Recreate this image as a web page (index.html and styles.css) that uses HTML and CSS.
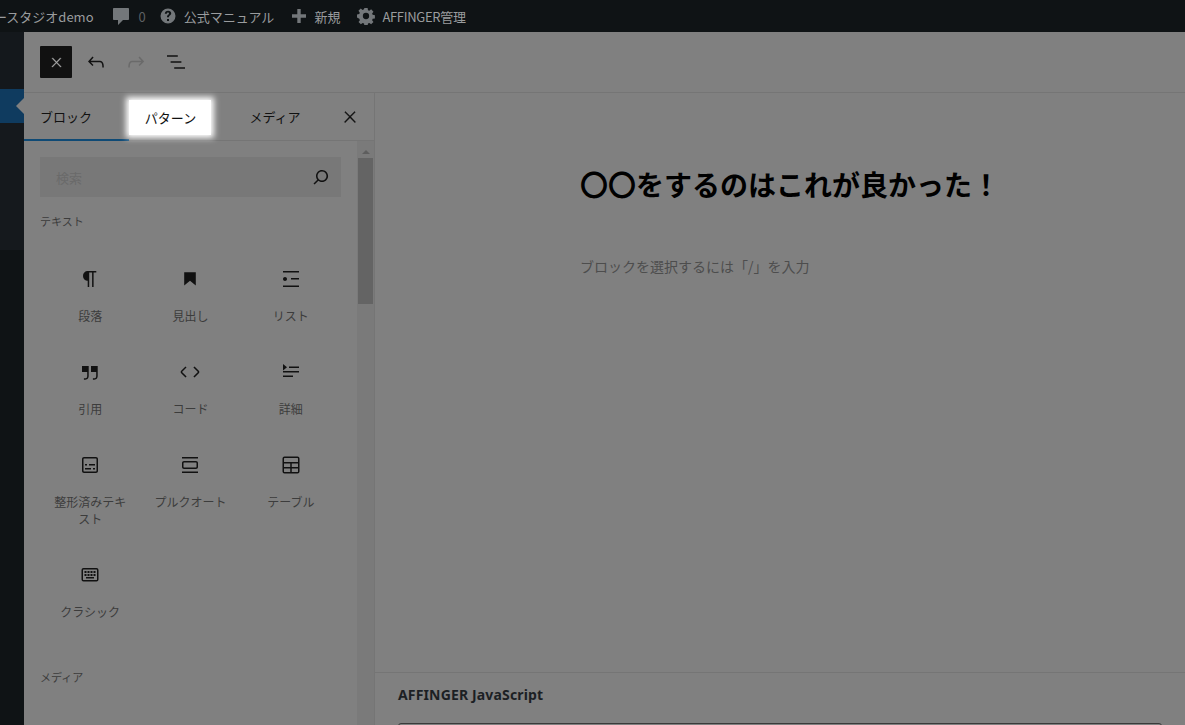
FILE: index.html
```html
<!DOCTYPE html>
<html lang="ja">

<head>
    <meta charset="UTF-8">
    <title>投稿を編集</title>
    <link rel="stylesheet" href="styles.css">
</head>

<body>
    <div class="adminbar">
        <span class="bar-item site-name">ースタジオdemo</span>
        <span class="bar-item comments">
            <svg class="bar-icon" viewBox="0 0 20 20"><path d="M3 2h14c.6 0 1 .4 1 1v10c0 .6-.4 1-1 1h-5l-5 5v-5H3c-.6 0-1-.4-1-1V3c0-.6.4-1 1-1z"/></svg>
            <span class="count">0</span>
        </span>
        <span class="bar-item manual">
            <svg class="bar-icon" viewBox="0 0 20 20"><path fill-rule="evenodd" d="M10 2.500a7.500 7.500 0 1 1 0 15 7.500 7.500 0 0 1 0-15zM9 13v2h2v-2H9zm1.100-8.200c-1.900 0-3.200 1-3.300 2.900h2c0-.8.5-1.200 1.200-1.200.6 0 1 .4 1 1 0 .5-.3.8-.8 1.200-.9.6-1.200 1.200-1.200 2.500h2c0-.8.2-1.100.9-1.600.8-.6 1.300-1.200 1.300-2.300 0-1.500-1.200-2.500-3.100-2.500z"/></svg>
            公式マニュアル
        </span>
        <span class="bar-item new">
            <svg class="bar-icon" viewBox="0 0 20 20"><path d="M8.300 3h3.400v5.300H17v3.400h-5.300V17H8.300v-5.300H3V8.300h5.300z"/></svg>
            新規
        </span>
        <span class="bar-item affinger">
            <svg class="bar-icon gear" viewBox="0 0 20 20"><path fill-rule="evenodd" d="M8.200 1h3.600l.4 2.500 1.500.6 2-1.500 2.600 2.600-1.500 2 .6 1.500 2.500.4v3.600l-2.500.4-.6 1.500 1.500 2-2.600 2.600-2-1.500-1.500.6-.4 2.500H8.200l-.4-2.500-1.500-.6-2 1.500-2.600-2.600 1.500-2-.6-1.500L0 11.800V8.200l2.500-.4.6-1.500-1.500-2 2.600-2.600 2 1.500 1.500-.6zM10 6.500a3.500 3.500 0 1 0 0 7 3.500 3.500 0 0 0 0-7z"/></svg>
            AFFINGER管理
        </span>
    </div>

    <div class="main">
        <div class="wpmenu">
            <div class="menu-top"></div>
            <div class="menu-active"><span class="menu-arrow"></span></div>
            <div class="menu-rest"></div>
        </div>

        <div class="editor">
            <div class="toolbar">
                <button class="close-editor">
                    <svg viewBox="0 0 24 24"><path d="M13 11.800l6.100-6.300-1-1-6.100 6.200-6.100-6.200-1 1 6.100 6.300-6.500 6.700 1 1 6.500-6.600 6.500 6.600 1-1z"/></svg>
                </button>
                <button class="tool">
                    <svg viewBox="0 0 24 24"><path d="M18.300 11.700c-.6-.6-1.400-.9-2.300-.9H6.700l2.900-3.300-1.100-1-4.500 5L8.500 16l1-1-2.700-2.700H16c.5 0 .9.2 1.300.5 1 1 1 3.400 1 4.500v.3h1.500v-.2c0-1.500 0-4.300-1.500-5.700z"/></svg>
                </button>
                <button class="tool disabled">
                    <svg viewBox="0 0 24 24"><path d="M15.600 6.500l-1.100 1 2.900 3.300H8c-.9 0-1.700.3-2.300.9-1.400 1.500-1.400 4.200-1.400 5.600v.2h1.500v-.3c0-1.100 0-3.500 1-4.500.3-.3.7-.5 1.300-.5h9.200L14.500 15l1.100 1.100 4.600-4.600-4.600-5z"/></svg>
                </button>
                <button class="tool">
                    <svg viewBox="0 0 24 24"><path d="M13.800 5.200H3v1.500h10.800V5.200zm-3.600 12v1.500H21v-1.500H10.200zm7.200-6H6.600v1.500h10.800v-1.500z"/></svg>
                </button>
            </div>

            <div class="workspace">
                <div class="inserter">
                    <div class="tabs">
                        <div class="tab tab-active">ブロック</div>
                        <div class="tab tab-glow">パターン</div>
                        <div class="tab">メディア</div>
                        <button class="tabs-close">
                            <svg viewBox="0 0 24 24"><path d="M13 11.800l6.100-6.300-1-1-6.100 6.200-6.100-6.200-1 1 6.100 6.300-6.500 6.700 1 1 6.500-6.600 6.500 6.600 1-1z"/></svg>
                        </button>
                    </div>
                    <div class="inserter-body">
                        <div class="block-list">
                            <div class="search">
                                <span class="search-text">検索</span>
                                <svg viewBox="0 0 24 24"><path d="M13 5c-3.300 0-6 2.700-6 6 0 1.400.5 2.700 1.300 3.700l-3.800 3.800 1.100 1.100 3.800-3.800c1 .8 2.300 1.300 3.700 1.300 3.300 0 6-2.700 6-6S16.300 5 13 5zm0 10.500c-2.500 0-4.500-2-4.500-4.500s2-4.500 4.500-4.500 4.500 2 4.500 4.500-2 4.500-4.500 4.500z"/></svg>
                            </div>
                            <div class="category">テキスト</div>
                            <div class="block-grid">
                                <div class="block">
                                    <svg viewBox="0 0 24 24"><path d="M18.300 4H9.900v-.1l-.9.2c-2.300.4-4 2.400-4 4.800s1.700 4.400 4 4.800l.7.1V20h1.500V5.500h2.900V20h1.500V5.500h2.700V4z"/></svg>
                                    <span>段落</span>
                                </div>
                                <div class="block">
                                    <svg viewBox="0 0 24 24"><path d="M6.200 5.200v13.400l5.800-4.800 5.800 4.800V5.200z"/></svg>
                                    <span>見出し</span>
                                </div>
                                <div class="block">
                                    <svg viewBox="0 0 24 24"><path d="M4 4v1.500h16V4H4zm8 8.500h8V11h-8v1.500zM4 20h16v-1.500H4V20zm4-8c0-1.100-.9-2-2-2s-2 .9-2 2 .9 2 2 2 2-.9 2-2z"/></svg>
                                    <span>リスト</span>
                                </div>
                                <div class="block">
                                    <svg viewBox="0 0 24 24"><path d="M13 6v6h5.200v4c0 .8-.2 1.400-.5 1.700-.6.600-1.600.6-2.500.5h-.3v1.500h.5c1 0 2.300-.1 3.300-1 .6-.6 1-1.600 1-2.800V6H13zm-9 6h5.200v4c0 .8-.2 1.400-.5 1.700-.6.600-1.600.6-2.500.5h-.3v1.500h.5c1 0 2.300-.1 3.300-1 .6-.6 1-1.600 1-2.800V6H4v6z"/></svg>
                                    <span>引用</span>
                                </div>
                                <div class="block">
                                    <svg viewBox="0 0 24 24"><path d="M20.800 10.700l-4.300-4.300-1.100 1.100 4.300 4.300c.1.100.1.300 0 .4l-4.300 4.300 1.100 1.100 4.300-4.300c.7-.8.700-1.900 0-2.600zM4.200 11.800l4.300-4.300-1-1-4.300 4.300c-.7.700-.7 1.800 0 2.500l4.300 4.300 1.100-1.100-4.300-4.300c-.2-.1-.2-.3-.1-.4z"/></svg>
                                    <span>コード</span>
                                </div>
                                <div class="block">
                                    <svg viewBox="0 0 24 24"><path d="M4 15.500h10V17H4v-1.500zM4 11h16v1.500H4V11zm6-4.500h10V8H10V6.500zM4 4l4 3.250-4 3.250z"/></svg>
                                    <span>詳細</span>
                                </div>
                                <div class="block">
                                    <svg viewBox="0 0 24 24"><path d="M18 4H6c-1.100 0-2 .9-2 2v12c0 1.100.9 2 2 2h12c1.100 0 2-.9 2-2V6c0-1.100-.9-2-2-2zm.5 14c0 .3-.2.5-.5.5H6c-.3 0-.5-.2-.5-.5V6c0-.3.2-.5.5-.5h12c.3 0 .5.2.5.5v12zM7 16.500h6V15H7v1.500zm4-4h6V11h-6v1.500zM9 11H7v1.500h2V11zm6 5.500h2V15h-2v1.500z"/></svg>
                                    <span>整形済みテキスト</span>
                                </div>
                                <div class="block">
                                    <svg viewBox="0 0 24 24"><path d="M18 8H6c-1.100 0-2 .9-2 2v4c0 1.100.9 2 2 2h12c1.100 0 2-.9 2-2v-4c0-1.100-.9-2-2-2zm.5 6c0 .3-.2.5-.5.5H6c-.3 0-.5-.2-.5-.5v-4c0-.3.2-.5.5-.5h12c.3 0 .5.2.5.5v4zM4 4v1.500h16V4H4zm0 16h16v-1.500H4V20z"/></svg>
                                    <span>プルクオート</span>
                                </div>
                                <div class="block">
                                    <svg viewBox="0 0 24 24"><path fill-rule="evenodd" d="M5.500 3.500h13a2 2 0 0 1 2 2v13a2 2 0 0 1-2 2h-13a2 2 0 0 1-2-2v-13a2 2 0 0 1 2-2zM5 5.500V9h14V5.500a.5.5 0 0 0-.5-.5h-13a.5.5 0 0 0-.5.5zm0 5V14h6.250v-3.500H5zm7.750 0V14H19v-3.500h-6.250zM5 15.500v3a.5.5 0 0 0 .5.5h5.750v-3.500H5zm7.750 0V19h5.750a.5.5 0 0 0 .5-.5v-3h-6.250z"/></svg>
                                    <span>テーブル</span>
                                </div>
                                <div class="block">
                                    <svg viewBox="0 0 24 24"><path d="M16 15.500H8V14h8zM8.500 13h-2v-2h2zm3 0h-2v-2h2zm3 0h-2v-2h2zm3 0h-2v-2h2zm-9-3h-2V8h2zm3 0h-2V8h2zm3 0h-2V8h2zm3 0h-2V8h2z"/><path d="M18.500 6.500h-13A.5.5 0 0 0 5 7v9.500a.5.5 0 0 0 .5.5h13a.5.5 0 0 0 .5-.5V7a.5.5 0 0 0-.5-.5zM5.500 5h13a2 2 0 0 1 2 2v9.500a2 2 0 0 1-2 2h-13a2 2 0 0 1-2-2V7a2 2 0 0 1 2-2z"/></svg>
                                    <span>クラシック</span>
                                </div>
                            </div>
                            <div class="category category-media">メディア</div>
                        </div>
                        <div class="scrollbar">
                            <div class="scroll-up"></div>
                            <div class="scroll-thumb"></div>
                        </div>
                    </div>
                </div>

                <div class="content">
                    <div class="canvas">
                        <h1 class="post-title">〇〇をするのはこれが良かった！</h1>
                        <p class="appender">ブロックを選択するには「/」を入力</p>
                    </div>
                    <div class="metabox">
                        <h2>AFFINGER JavaScript</h2>
                        <div class="meta-input"></div>
                    </div>
                </div>
            </div>
        </div>
    </div>
</body>

</html>
```

FILE: styles.css
```css
* {
    box-sizing: border-box;
}

html,
body {
    height: 100%;
}

body {
    margin: 0;
    overflow: hidden;
    background-color: #0f1315;
    font-family: "Noto Sans CJK JP", "Noto Sans", sans-serif;
    color: #111;
}

button {
    display: flex;
    align-items: center;
    justify-content: center;
    padding: 0;
    border: 0;
    background: none;
}

.adminbar {
    display: flex;
    align-items: center;
    height: 32px;
    background-color: #0f1315;
    color: #9a9c9e;
    font-size: 13px;
    overflow: hidden;
    white-space: nowrap;
}

.bar-item {
    display: flex;
    align-items: center;
    gap: 6px;
    margin-right: 19px;
}

.site-name {
    margin-left: -6px;
    margin-right: 17px;
}

.bar-icon {
    width: 20px;
    height: 20px;
    fill: #73777a;
}

.gear {
    width: 18px;
    height: 18px;
}

.comments {
    gap: 8px;
    margin-right: 12px;
}

.count {
    color: #5d6063;
}

.manual {
    gap: 6px;
    margin-right: 15px;
}

.new {
    gap: 5px;
    margin-right: 17px;
}

.affinger {
    gap: 7px;
    letter-spacing: -.3px;
}

.main {
    display: flex;
    height: 693px;
}

.wpmenu {
    display: flex;
    flex-direction: column;
    width: 24px;
    flex-shrink: 0;
}

.menu-top {
    height: 57px;
    background-color: #14181c;
}

.menu-active {
    position: relative;
    height: 34px;
    background-color: #0f3b5f;
}

.menu-arrow {
    position: absolute;
    top: 9px;
    right: 0;
    border: 8px solid transparent;
    border-left-width: 0;
    border-right-color: #808080;
}

.menu-rest {
    height: 127px;
    background-color: #15191d;
}

.editor {
    flex: 1;
    display: flex;
    flex-direction: column;
    min-width: 0;
    background-color: #808080;
}

.toolbar {
    display: flex;
    align-items: center;
    height: 61px;
    padding-left: 16px;
    gap: 8px;
    border-bottom: 1px solid #757575;
}

.close-editor {
    width: 32px;
    height: 32px;
    border-radius: 1px;
    background-color: #111;
}

.close-editor svg {
    width: 15px;
    height: 15px;
    fill: #a8a8a8;
    stroke: #a8a8a8;
    stroke-width: .5;
}

.tool {
    width: 32px;
    height: 32px;
}

.tool svg {
    width: 24px;
    height: 24px;
    fill: #111;
}

.tool.disabled svg {
    fill: #6a6a6a;
}

.workspace {
    flex: 1;
    display: flex;
    min-height: 0;
}

.inserter {
    display: flex;
    flex-direction: column;
    width: 351px;
    flex-shrink: 0;
    border-right: 1px solid #757575;
}

.tabs {
    position: relative;
    display: flex;
    flex-shrink: 0;
    height: 48px;
    border-bottom: 1px solid #757575;
}

.tab {
    display: flex;
    align-items: center;
    justify-content: center;
    width: 100px;
    font-size: 13px;
    color: #111;
}

.tab-active {
    width: 105px;
    margin-bottom: -1px;
    justify-content: flex-start;
    padding-left: 16px;
    border-bottom: 2px solid #0f4a75;
}

.tab-glow {
    width: 82px;
    height: 35px;
    margin: 7px 14px 0 0;
    padding-left: 1px;
    background-color: #fff;
    box-shadow: 0 0 6px 3px #fff;
}

.tabs-close {
    position: absolute;
    top: 12px;
    right: 12px;
    width: 24px;
    height: 24px;
}

.tabs-close svg {
    width: 18px;
    height: 18px;
    fill: #111;
    stroke: #111;
    stroke-width: .5;
}

.inserter-body {
    flex: 1;
    display: flex;
    min-height: 0;
    overflow: hidden;
}

.block-list {
    flex: 1;
    min-width: 0;
    padding: 16px 16px 0;
}

.search {
    display: flex;
    align-items: center;
    justify-content: space-between;
    height: 40px;
    padding: 0 8px 0 16px;
    background-color: #787878;
}

.search-text {
    font-size: 13px;
    color: #6a6a6a;
}

.search svg {
    width: 24px;
    height: 24px;
    fill: #111;
}

.category {
    margin-top: 15px;
    font-size: 11px;
    line-height: 18px;
    color: #3c3c3c;
}

.category-media {
    margin-top: 28px;
}

.block-grid {
    display: grid;
    grid-template-columns: repeat(3, 1fr);
    margin-top: 21px;
    align-items: start;
}

.block {
    display: flex;
    flex-direction: column;
    align-items: center;
    padding: 16px 12px 20px;
    text-align: center;
    font-size: 12px;
    line-height: 17px;
    color: #3c3c3c;
}

.block svg {
    width: 24px;
    height: 24px;
    fill: #111;
    margin-bottom: 16px;
}

.scrollbar {
    width: 17px;
    flex-shrink: 0;
    background-color: #7a7a7a;
}

.scroll-up {
    display: flex;
    justify-content: center;
    padding-top: 9px;
    height: 17px;
}

.scroll-up::before {
    content: "";
    height: 0;
    border: 4px solid transparent;
    border-top-width: 0;
    border-bottom-color: #5e5e5e;
}

.scroll-thumb {
    height: 146px;
    margin: 0 1px;
    background-color: #646464;
}

.content {
    flex: 1;
    display: flex;
    flex-direction: column;
    min-width: 0;
}

.canvas {
    flex: 1;
    padding: 67px 0 0 205px;
}

.post-title {
    margin: 0;
    font-size: 28px;
    line-height: 48px;
    font-weight: 700;
    color: #000;
}

.appender {
    margin: 46px 0 0;
    font-size: 14px;
    line-height: 24px;
    color: #4d4d4d;
}

.metabox {
    height: 53px;
    padding: 13px 23px 0;
    border-top: 1px solid #757575;
}

.metabox h2 {
    margin: 0;
    font-family: "Noto Sans", sans-serif;
    font-size: 14px;
    line-height: 18px;
    font-weight: 700;
    letter-spacing: .15px;
    color: #1c1f24;
}

.meta-input {
    height: 10px;
    margin-top: 19px;
    border: 1px solid #3a3a3a;
    border-radius: 3px;
}
```
